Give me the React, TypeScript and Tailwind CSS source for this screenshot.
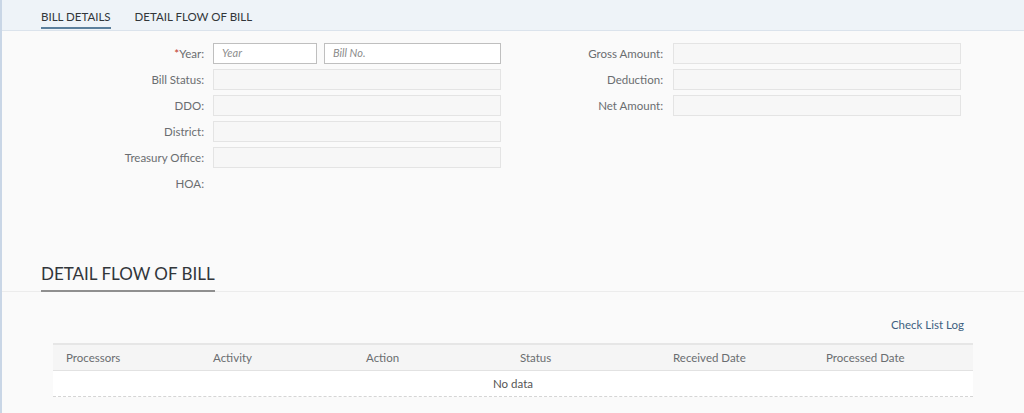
import React from "react";

const font = { fontFamily: "Lato, 'Open Sans', Arial, sans-serif" };

function Row({ label, required, children }: { label: string; required?: boolean; children?: React.ReactNode }) {
  return (
    <div className="flex items-center h-[21px]">
      <div className="w-[204px] text-right text-[11.5px] text-[#6a6d70] shrink-0">
        {required && <span className="text-[#c0392b]">*</span>}
        {label}:
      </div>
      <div className="ml-[9px] flex gap-[7px]">{children}</div>
    </div>
  );
}

function RRow({ label }: { label: string }) {
  return (
    <div className="flex items-center h-[21px]">
      <div className="w-[165px] text-right text-[11.5px] text-[#6a6d70] shrink-0">{label}:</div>
      <div className="ml-[10px] w-[288px] h-[21px] bg-[#f7f7f7] border border-[#e4e4e4]" />
    </div>
  );
}

const Disabled = () => <div className="w-[288px] h-[21px] bg-[#f7f7f7] border border-[#e4e4e4]" />;

export default function App() {
  const cols = ["Processors", "Activity", "Action", "Status", "Received Date", "Processed Date"];
  return (
    <div className="w-full h-[413px] bg-[#fafafa] border-l-2 border-[#c9d6e6] overflow-hidden" style={font}>
      <div className="h-[31px] bg-[#eef3f8] border-b border-[#dbe3ec] flex pl-[39px] gap-[24px]">
        <div className="h-full flex flex-col justify-end">
          <div className="text-[11.5px] text-[#32363a] leading-none pb-[5px]">BILL DETAILS</div>
          <div className="h-[2px] bg-[#5b7f9c] mb-[1px]" />
        </div>
        <div className="h-full flex flex-col justify-end">
          <div className="text-[11.5px] text-[#32363a] leading-none pb-[8px]">DETAIL FLOW OF BILL</div>
        </div>
      </div>

      <div className="flex pt-[12px]">
        <div className="flex flex-col gap-[5px] w-[498px] -ml-[2px]">
          <Row label="Year" required>
            <div className="w-[104px] h-[21px] bg-white border border-[#bfbfbf] flex items-center px-[8px] text-[11px] italic text-[#8c8c8c]">Year</div>
            <div className="w-[177px] h-[21px] bg-white border border-[#bfbfbf] flex items-center px-[8px] text-[11px] italic text-[#8c8c8c]">Bill No.</div>
          </Row>
          <Row label="Bill Status"><Disabled /></Row>
          <Row label="DDO"><Disabled /></Row>
          <Row label="District"><Disabled /></Row>
          <Row label="Treasury Office"><Disabled /></Row>
          <Row label="HOA" />
        </div>
        <div className="flex flex-col gap-[5px]">
          <RRow label="Gross Amount" />
          <RRow label="Deduction" />
          <RRow label="Net Amount" />
        </div>
      </div>

      <div className="mt-[68px] border-b border-[#ececec] pl-[39px]">
        <div className="inline-block text-[17px] text-[#32363a] leading-none pb-[8px] border-b-2 border-[#8f8f8f] -mb-[1px]">
          DETAIL FLOW OF BILL
        </div>
      </div>

      <div className="px-[51px] mt-[26px]">
        <div className="flex justify-end pr-[9px] text-[11.5px] text-[#3d5f80] h-[14px] items-center">Check List Log</div>
        <div className="mt-[11px] border-t-2 border-[#e6e6e6]">
          <div className="grid grid-cols-[147px_153px_154px_153px_153px_1fr] h-[26px] bg-[#f5f5f5] border-b border-[#e2e2e2] items-center">
            {cols.map((c) => (
              <div key={c} className="pl-[13px] text-[11.5px] text-[#6a6d70]">{c}</div>
            ))}
          </div>
          <div className="h-[26px] bg-white border-b border-dashed border-[#d5d5d5] flex items-center justify-center text-[11.5px] text-[#555]">
            No data
          </div>
        </div>
      </div>
    </div>
  );
}
